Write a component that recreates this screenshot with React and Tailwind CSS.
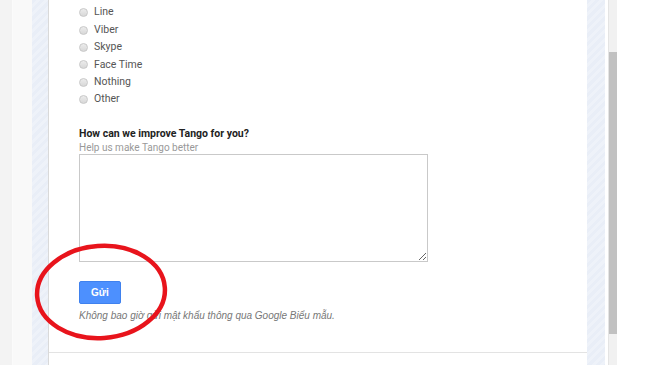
const options = ['Line', 'Viber', 'Skype', 'Face Time', 'Nothing', 'Other']

const stripes = 'bg-[repeating-linear-gradient(135deg,#e9eef7_0px,#e9eef7_3px,#eef2f9_3px,#eef2f9_6px)]'

const Radio = ({ label }) => (
  <label className="flex items-center h-[17.4px] gap-[6px]">
    <span className="w-[9px] h-[9px] rounded-full border border-[#c8c8c8] bg-gradient-to-b from-[#ececec] to-[#d8d8d8] shrink-0" />
    <span className="text-[10.5px] text-[#555] leading-none">{label}</span>
  </label>
)

const App = () => {
  return (
    <div className="relative w-[648px] h-[365px] overflow-hidden flex bg-white font-['Roboto',sans-serif]">
      {/* left page margin */}
      <div className="w-[12px] bg-[#f3f3f3]" />
      <div className="w-[20px] bg-[#f9f9f9] border-l border-[#fbfbfb]" />
      <div className={`w-[16px] ${stripes}`} />

      {/* form card */}
      <div className="w-[539px] border-l border-[#d9d9d9] bg-white flex flex-col">
        <div className="pl-[30px] pt-[4px]">
          <div className="flex flex-col">
            {options.map(o => <Radio key={o} label={o} />)}
          </div>

          <h3 className="mt-[19px] text-[10.5px] leading-[14px] font-bold text-[#222]">How can we improve Tango for you?</h3>
          <p className="text-[10px] leading-[13px] text-[#999]">Help us make Tango better</p>
          <textarea className="w-[349px] h-[108px] border border-[#c9c9c9] bg-white block" />

          <button className="mt-[19px] w-[42px] h-[23px] rounded-[2px] bg-[#4d90fe] border border-[#3f81ee] text-white text-[10px] font-bold font-['Liberation_Sans',sans-serif] flex items-center justify-center">
            Gửi
          </button>
          <p className="mt-[5px] text-[10px] leading-[14px] italic text-[#777] font-['Liberation_Sans',sans-serif]">
            Không bao giờ gửi mật khẩu thông qua Google Biểu mẫu.
          </p>
        </div>
        <div className="mt-auto mb-[12px] border-t border-[#e3e3e3]" />
      </div>

      {/* right page margin */}
      <div className={`w-[18px] ${stripes}`} />
      <div className="w-[3px] bg-white" />
      <div className="w-[9px] bg-[#f1f1f1] border-l border-[#e4e4e4] flex flex-col">
        <div className="h-[52px]" />
        <div className="h-[282px] bg-[#c1c1c1]" />
      </div>
      <div className="flex-1 bg-white" />

      {/* red annotation ellipse */}
      <svg className="absolute left-[33px] top-[241px]" width="138" height="102" viewBox="0 0 138 102">
        <ellipse cx="68" cy="51" rx="64" ry="46" fill="none" stroke="#e8141c" strokeWidth="4.5" transform="rotate(-4 68 51)" />
      </svg>
    </div>
  )
}

export default App
